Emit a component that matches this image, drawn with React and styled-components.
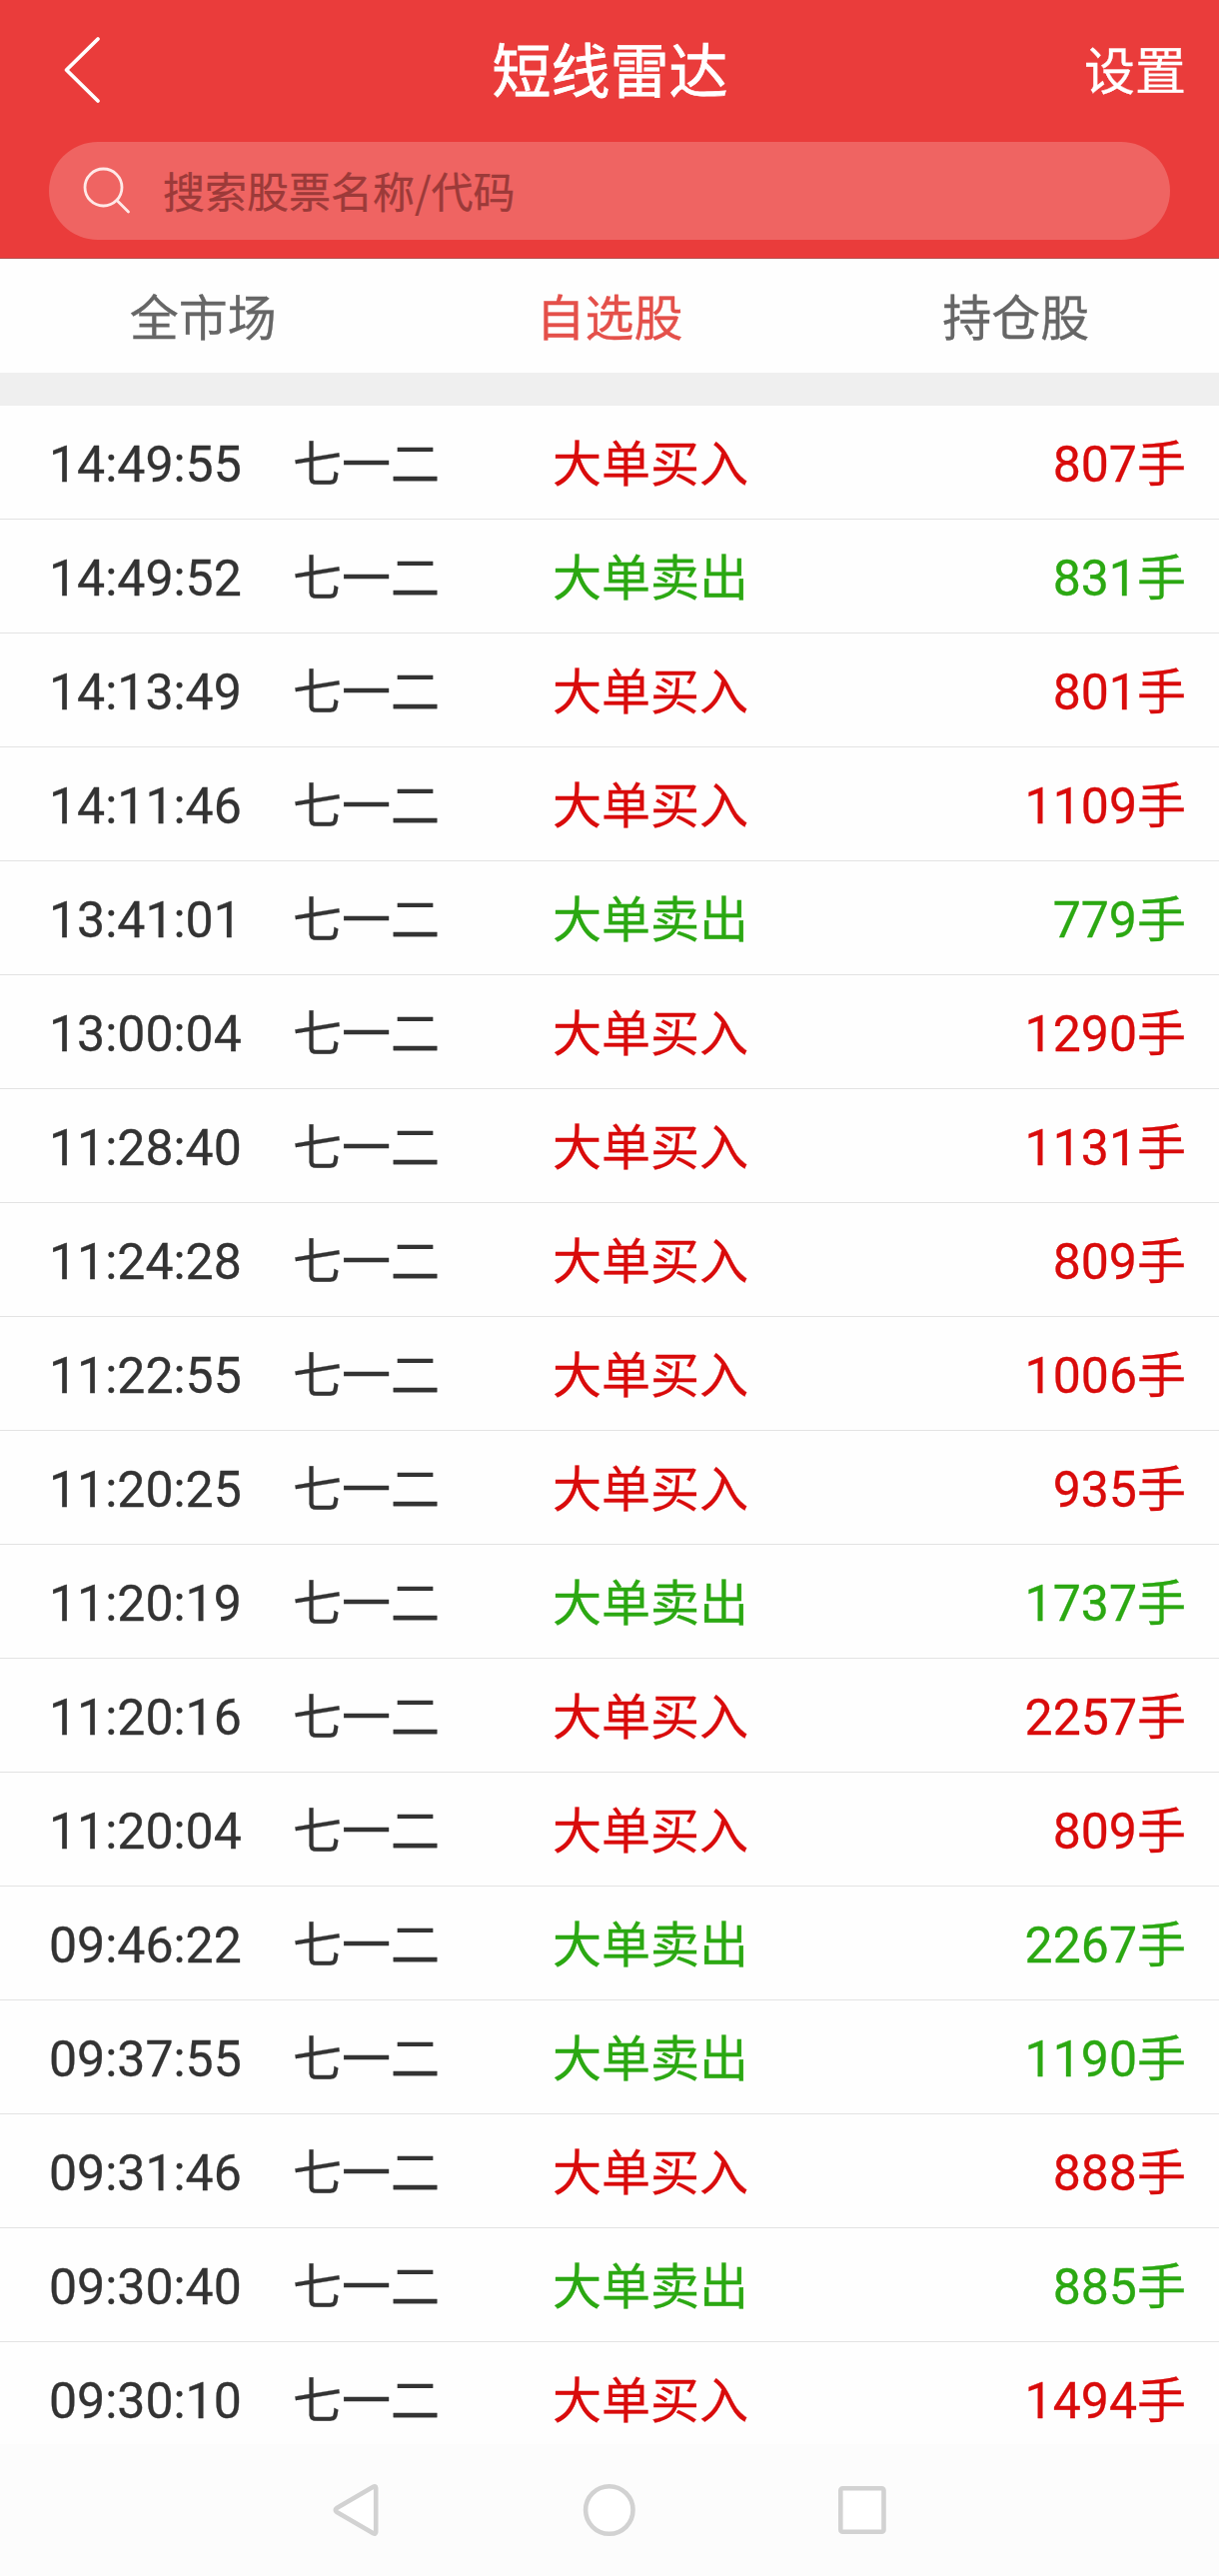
import React from 'react';
import styled, { createGlobalStyle } from 'styled-components';

const records = [
    ['14:49:55', 'buy', 807],
    ['14:49:52', 'sell', 831],
    ['14:13:49', 'buy', 801],
    ['14:11:46', 'buy', 1109],
    ['13:41:01', 'sell', 779],
    ['13:00:04', 'buy', 1290],
    ['11:28:40', 'buy', 1131],
    ['11:24:28', 'buy', 809],
    ['11:22:55', 'buy', 1006],
    ['11:20:25', 'buy', 935],
    ['11:20:19', 'sell', 1737],
    ['11:20:16', 'buy', 2257],
    ['11:20:04', 'buy', 809],
    ['09:46:22', 'sell', 2267],
    ['09:37:55', 'sell', 1190],
    ['09:31:46', 'buy', 888],
    ['09:30:40', 'sell', 885],
    ['09:30:10', 'buy', 1494],
];

const tabs = ['全市场', '自选股', '持仓股'];

const App = () => {
    return(
        <Screen>
            <GlobalStyle />
            <Header>
                <TitleBar>
                    <Back aria-label="返回">
                        <svg width="42" height="70" viewBox="0 0 42 70" fill="none" stroke="#fff" strokeWidth="3.8" strokeLinecap="round" strokeLinejoin="round">
                            <path d="M36 4 L4.5 35 L36 66" />
                        </svg>
                    </Back>
                    <Title>短线雷达</Title>
                    <Settings>设置</Settings>
                </TitleBar>
                <Search>
                    <svg width="48" height="48" viewBox="0 0 48 48" fill="none" stroke="#ffe9e8" strokeWidth="2.8" strokeLinecap="round">
                        <circle cx="20.5" cy="20.5" r="18.5" />
                        <path d="M34 33.5 L45.5 45" />
                    </svg>
                    <span>搜索股票名称/代码</span>
                </Search>
            </Header>
            <Tabs>
                {tabs.map((tab) => (
                    <Tab key={tab} $active={tab === '自选股'}>{tab}</Tab>
                ))}
            </Tabs>
            <List>
                {records.map(([time, side, volume]) => (
                    <Row key={time}>
                        <div><Digits>{time}</Digits></div>
                        <div>七一二</div>
                        <Signal $side={side}>{side === 'buy' ? '大单买入' : '大单卖出'}</Signal>
                        <Signal $side={side}><Digits>{volume}</Digits>手</Signal>
                    </Row>
                ))}
            </List>
            <NavBar>
                <svg width="54" height="54" viewBox="0 0 54 54" fill="#fff" stroke="#d2d2d2" strokeWidth="4.6" strokeLinejoin="round">
                    <path d="M46.2 5 V49 Q46 51.5 43.5 50.2 L7 29 Q4.5 27 7 25 L43.5 3.8 Q46 2.5 46.2 5 Z" />
                </svg>
                <svg width="54" height="54" viewBox="0 0 54 54" fill="#fff" stroke="#d2d2d2" strokeWidth="4.6">
                    <circle cx="26.8" cy="27" r="23.7" />
                </svg>
                <svg width="54" height="54" viewBox="0 0 54 54" fill="#fff" stroke="#d2d2d2" strokeWidth="4.6">
                    <rect x="5.3" y="5.3" width="43.2" height="43.4" rx="2" />
                </svg>
            </NavBar>
        </Screen>
    )
}

const GlobalStyle = createGlobalStyle`
    body{
        margin: 0;
        background: #fefefe;
    }
    svg{
        display: block;
        flex-shrink: 0;
    }
`;
const Screen = styled.div`
    display: flex;
    flex-direction: column;
    width: 1220px;
    height: 2578px;
    overflow: hidden;
    background: #fefefe;
    font-family: "Noto Sans CJK SC", sans-serif;
    font-size: 49px;
    white-space: nowrap;
    -webkit-text-stroke: 0.3px currentColor;
`;
const Header = styled.header`
    box-sizing: border-box;
    height: 259px;
    flex-shrink: 0;
    background: #ea3c3b;
    border-bottom: 1px solid #b5514f;
    color: #fff;
`;
const TitleBar = styled.div`
    display: grid;
    grid-template-columns: 1fr auto 1fr;
    align-items: center;
    height: 142px;
    padding: 0 33px 0 62px;
    box-sizing: border-box;
`;
const Back = styled.div`
    padding-bottom: 3px;
`;
const Title = styled.h1`
    margin: 0 0 7px;
    padding-right: 28px;
    font-size: 59px;
    font-weight: 400;
    line-height: 80px;
    -webkit-text-stroke: 0.8px currentColor;
`;
const Settings = styled.div`
    text-align: right;
    font-size: 51px;
    line-height: 80px;
    padding-bottom: 7px;
`;
const Search = styled.div`
    display: flex;
    align-items: center;
    gap: 32px;
    height: 98px;
    margin: 0 49px;
    padding-left: 34px;
    border-radius: 49px;
    background: #ef6462;
    color: #9c3a39;
    font-size: 42px;
    line-height: 60px;
    span{
        padding-bottom: 3px;
    }
`;
const Tabs = styled.nav`
    display: grid;
    grid-template-columns: repeat(3, 1fr);
    height: 114px;
    flex-shrink: 0;
    border-bottom: 33px solid #efefef;
`;
const Tab = styled.div`
    text-align: center;
    line-height: 111px;
    color: ${({ $active }) => ($active ? '#e4504a' : '#666')};
`;
const List = styled.div`
    flex: 1;
    min-height: 0;
    overflow: hidden;
`;
const Row = styled.div`
    display: grid;
    grid-template-columns: 244px 260px 1fr auto;
    box-sizing: border-box;
    height: 114px;
    padding: 0 33px 0 49px;
    border-bottom: 1px solid #e3e3e3;
    line-height: 110px;
    color: #333;
`;
const Digits = styled.span`
    font-family: Roboto, sans-serif;
    font-size: 50px;
    line-height: 1;
`;
const Signal = styled.div`
    color: ${({ $side }) => ($side === 'buy' ? '#d90b0b' : '#2ba812')};
`;
const NavBar = styled.footer`
    display: flex;
    justify-content: center;
    align-items: center;
    gap: 199px;
    height: 132px;
    flex-shrink: 0;
    background: #fcfcfc;
`;
export default App;
